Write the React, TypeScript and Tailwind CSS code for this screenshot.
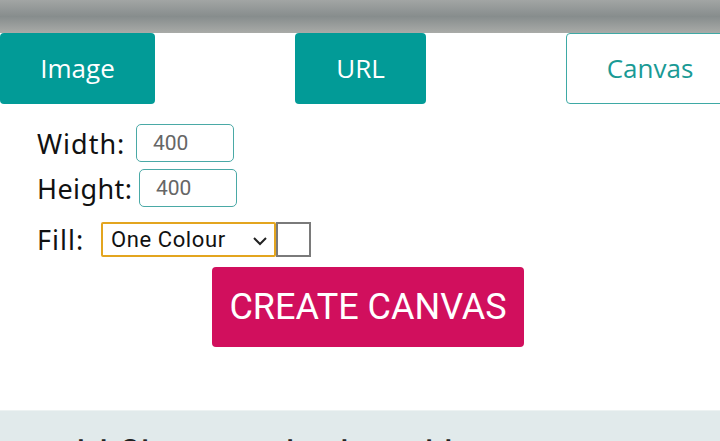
import React from 'react'

const App = () => {
  return (
    <div className="w-[720px] h-[441px] overflow-hidden bg-white font-['Noto_Sans',sans-serif]">
      {/* blurred hero image strip */}
      <div className="h-[33px] bg-gradient-to-b from-[#a2a5a4] via-[#878d8d] to-[#a9aba8]"></div>

      {/* source tabs */}
      <div className="flex h-[71px] overflow-hidden">
        <button className="w-[155px] shrink-0 rounded-[4px] bg-[#029b97] text-white text-[26px] font-['Open_Sans',sans-serif]">
          Image
        </button>
        <button className="ml-[140px] w-[131px] shrink-0 rounded-[4px] bg-[#029b97] text-white text-[26px] font-['Open_Sans',sans-serif]">
          URL
        </button>
        <button className="ml-[140px] w-[170px] shrink-0 rounded-[4px] border border-[#3ea9a5] bg-white pr-[2px] text-[#1a9a95] text-[26px] font-['Open_Sans',sans-serif]">
          Canvas
        </button>
      </div>

      {/* canvas form */}
      <div className="pl-[37px] pt-[20px]">
        <div className="flex h-[38px] items-center">
          <span className="w-[99px] text-[27px] leading-none text-[#111] tracking-[1px]">Width:</span>
          <input
            defaultValue="400"
            className="w-[98px] h-[38px] rounded-[5px] border border-[#4aa9a6] px-[16px] text-[21px] text-[#666] font-['Roboto',sans-serif] outline-none"
          />
        </div>
        <div className="mt-[7px] flex h-[38px] items-center">
          <span className="w-[102px] text-[27px] leading-none text-[#111] tracking-[0.4px]">Height:</span>
          <input
            defaultValue="400"
            className="w-[98px] h-[38px] rounded-[5px] border border-[#4aa9a6] px-[16px] text-[21px] text-[#666] font-['Roboto',sans-serif] outline-none"
          />
        </div>
        <div className="mt-[15px] flex h-[35px] items-center">
          <span className="w-[64px] text-[27px] leading-none text-[#111] tracking-[1px]">Fill:</span>
          <div className="flex w-[175px] h-[35px] items-center justify-between rounded-[2px] border-2 border-[#e3a51f] pl-[8px] pr-[5px]">
            <span className="text-[22px] leading-none text-[#111] tracking-[0.6px] font-['Roboto',sans-serif]">One Colour</span>
            <svg width="18" height="18" viewBox="0 0 18 18" fill="none" stroke="#222" strokeWidth="2">
              <path d="M3 7l6 6 6-6" />
            </svg>
          </div>
          <div className="w-[35px] h-[35px] border-2 border-[#7a7a7a] bg-white"></div>
        </div>
        <button className="mt-[10px] ml-[175px] w-[312px] h-[80px] rounded-[4px] bg-[#d10f5d] text-white text-[36px] font-['Roboto',sans-serif]">
          CREATE CANVAS
        </button>
      </div>

      {/* next section */}
      <div className="mt-[63px] h-[60px] bg-[#e1eaeb] border-t border-[#edf2f2] pt-[26px] pl-[37px]">
        <h2 className="text-[40px] leading-none text-[#222] whitespace-nowrap font-['Roboto',sans-serif]">
          Add filters and adjust like a Pro
        </h2>
      </div>
    </div>
  )
}

export default App
